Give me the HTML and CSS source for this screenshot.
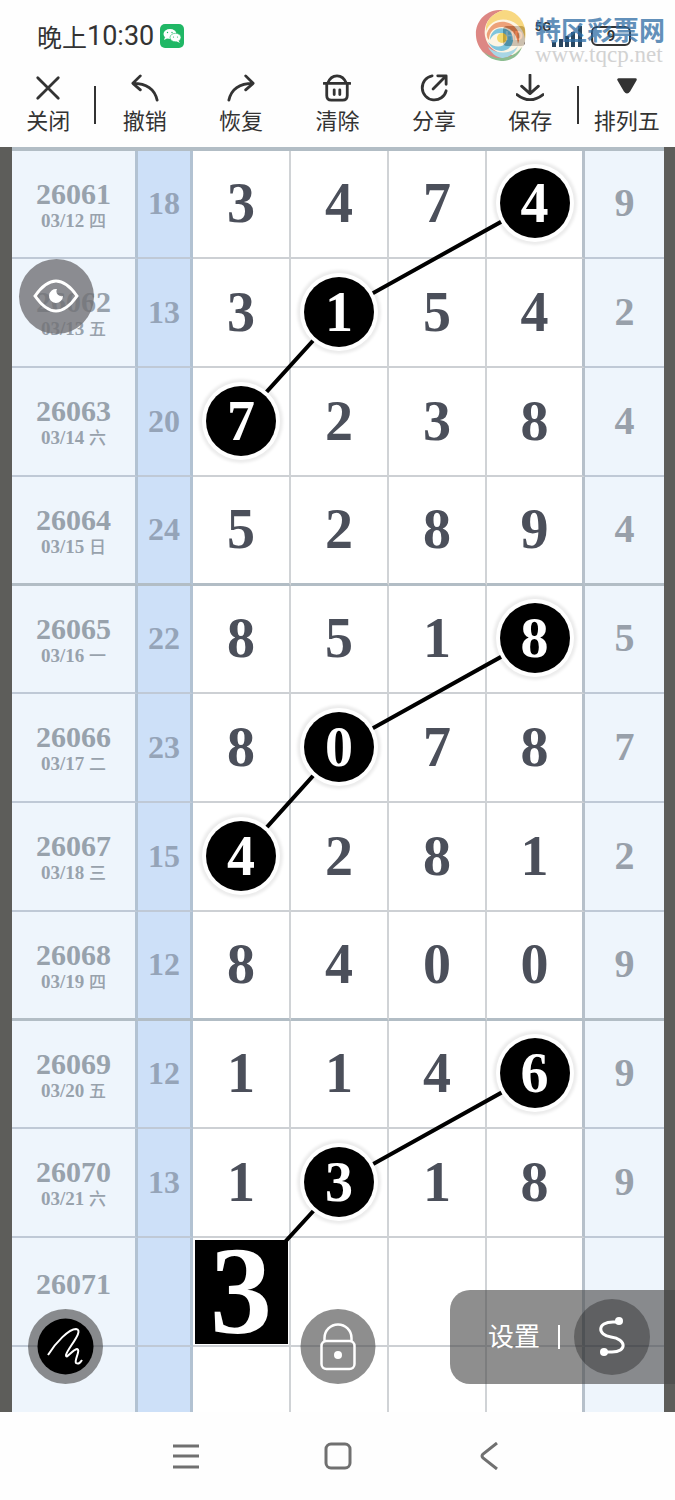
FILE: index.html
```
<!DOCTYPE html>
<html lang="zh-CN">
<head>
  <meta charset="UTF-8">
  <meta name="viewport" content="width=device-width, initial-scale=1">
  <title>排列五</title>
  <link rel="stylesheet" href="styles.css">
</head>
<body>
  <header class="status-bar">
    <div class="clock">晚上<span class="time">10:30</span>
      <svg class="wechat" viewBox="0 0 24 24"><rect width="24" height="24" rx="5" fill="#20b765"/><ellipse cx="10" cy="10" rx="6.500" ry="5" fill="#fff"/><path d="M5 13l-1 3 4-2z" fill="#fff"/><ellipse cx="15.500" cy="13.500" rx="5.500" ry="4.200" fill="#fff" stroke="#20b765" stroke-width=".6"/><path d="M18 16l2 3-4-2z" fill="#fff"/><g fill="#20b765"><circle cx="7.500" cy="8.500" r=".7"/><circle cx="12" cy="8.500" r=".7"/><circle cx="13.500" cy="13" r=".6"/><circle cx="17.500" cy="13" r=".6"/></g></svg>
    </div>
    <div class="phone-icons">
      <span class="hd">HD</span>
      <span class="net">5G</span>
      <svg class="signal" viewBox="0 0 32 22"><path d="M3 22v-5M10 22v-8M16 22V11M22 22V7M29 22V1" stroke="#294660" stroke-width="4"/></svg>
      <span class="battery">9</span>
    </div>
    <div class="watermark">
      <svg class="wm-logo" viewBox="0 0 52 52">
        <circle cx="26" cy="26" r="25" fill="#fdf3dc"/>
        <path d="M24 1C8 2 0 15 1 27C2 39 11 49 22 50C29 51 35 49 38 46C24 47 12 39 10 27C8 15 15 5 29 1z" fill="#d3605c"/>
        <path d="M29 1C15 5 10 14 11 22C15 12 26 8 36 12C44 15 49 22 50 30C53 14 42 1 29 1z" fill="#f6cc58"/>
        <path d="M12 24C16 13 27 10 36 15C44 20 46 27 43 35C42 25 35 18 27 18C19 18 14 23 14 31Q11 28 12 24z" fill="#e8834d"/>
        <path d="M15 31C15 22 23 17 31 20C38 23 40 31 36 37C30 45 18 43 13 33C19 39 28 39 31 33C33 28 30 24 25 24C20 24 17 27 15 31z" fill="#55b2d2"/>
        <path d="M13 38C22 46 37 45 43 37C40 45 33 49 27 49C21 48 16 44 13 38z" fill="#8cc9dd"/>
        <path d="M9 43C21 53 38 50 47 38C43 49 34 52 26 52C19 51 13 49 9 43z" fill="#67a86d"/>
        <circle cx="27" cy="29" r="5" fill="#f1cf3d"/>
      </svg>
      <div class="wm-text">
        <strong>特区彩票网</strong>
        <span>www.tqcp.net</span>
      </div>
    </div>
  </header>

  <nav class="toolbar">
    <button class="tool divider"><svg viewBox="0 0 30 30"><path d="M4 4l22 22M26 4L4 26"/></svg>关闭</button>
    <button class="tool"><svg viewBox="0 0 30 30"><path d="M10 2L2 10l8 7M2 10Q24 10 28 28"/></svg>撤销</button>
    <button class="tool"><svg viewBox="0 0 30 30"><path d="M20 2l8 8-8 7M28 10Q6 10 2 28"/></svg>恢复</button>
    <button class="tool"><svg viewBox="0 0 30 30"><path d="M1 10h28M5 10Q8 2 15 2T25 10M4 10v13q0 5 5 5h12q5 0 5-5V10M12 17v5M18 17v5"/></svg>清除</button>
    <button class="tool"><svg viewBox="0 0 30 30"><path d="M13 2A13 13 0 1 0 28 18M14 16L27 3M19 2h9v9"/></svg>分享</button>
    <button class="tool divider"><svg viewBox="0 0 30 30"><path d="M15 1v20M6 13l9 8 9-8M1 22q14 11 28 0"/></svg>保存</button>
    <button class="tool"><svg viewBox="0 0 30 30"><path d="M6 6h18l-7 12q-2 3-4 0z" fill="currentColor"/></svg>排列五</button>
  </nav>

  <main class="chart">
    <table class="draws">
      <colgroup><col class="col-issue"><col class="col-sum"><col><col><col><col><col class="col-last"></colgroup>
      <tbody>
        <tr class="first"><th>26061<small>03/12 <i>四</i></small></th><td class="sum">18</td><td>3</td><td>4</td><td>7</td><td><span class="ball">4</span></td><td class="last">9</td></tr>
        <tr><th>26062<small>03/13 <i>五</i></small></th><td class="sum">13</td><td>3</td><td><span class="ball">1</span></td><td>5</td><td>4</td><td class="last">2</td></tr>
        <tr><th>26063<small>03/14 <i>六</i></small></th><td class="sum">20</td><td><span class="ball">7</span></td><td>2</td><td>3</td><td>8</td><td class="last">4</td></tr>
        <tr class="group-end"><th>26064<small>03/15 <i>日</i></small></th><td class="sum">24</td><td>5</td><td>2</td><td>8</td><td>9</td><td class="last">4</td></tr>
        <tr class="first"><th>26065<small>03/16 <i>一</i></small></th><td class="sum">22</td><td>8</td><td>5</td><td>1</td><td><span class="ball">8</span></td><td class="last">5</td></tr>
        <tr><th>26066<small>03/17 <i>二</i></small></th><td class="sum">23</td><td>8</td><td><span class="ball">0</span></td><td>7</td><td>8</td><td class="last">7</td></tr>
        <tr><th>26067<small>03/18 <i>三</i></small></th><td class="sum">15</td><td><span class="ball">4</span></td><td>2</td><td>8</td><td>1</td><td class="last">2</td></tr>
        <tr class="group-end"><th>26068<small>03/19 <i>四</i></small></th><td class="sum">12</td><td>8</td><td>4</td><td>0</td><td>0</td><td class="last">9</td></tr>
        <tr class="first"><th>26069<small>03/20 <i>五</i></small></th><td class="sum">12</td><td>1</td><td>1</td><td>4</td><td><span class="ball">6</span></td><td class="last">9</td></tr>
        <tr><th>26070<small>03/21 <i>六</i></small></th><td class="sum">13</td><td>1</td><td><span class="ball">3</span></td><td>1</td><td>8</td><td class="last">9</td></tr>
        <tr class="next"><th>26071</th><td class="sum"></td><td><span class="pick">3</span></td><td></td><td></td><td></td><td class="last"></td></tr>
        <tr class="cut"><th></th><td class="sum"></td><td></td><td></td><td></td><td></td><td class="last"></td></tr>
      </tbody>
    </table>

    <!-- lines between the marked numbers, spans the four white columns -->
    <svg class="links" viewBox="0 0 392 1265" preserveAspectRatio="none">
      <path d="M342 56L146 165L48 273M342 491L146 600L48 709M342 927L146 1036L48 1143"/>
    </svg>

    <button class="round eye" aria-label="显示"><svg viewBox="0 0 75 75"><path d="M16 37Q37 7 58 37Q37 67 16 37z" fill="none" stroke="#fff" stroke-width="3"/><path d="M38 30a7 7 0 1 0 6 7 5 5 0 0 1-6-7z" fill="#fff"/></svg></button>
    <button class="round pen" aria-label="画笔"><svg viewBox="0 0 75 75"><circle cx="37.500" cy="37.500" r="28" fill="#000"/><path d="M20 46C28 33 41 20 48 20C57 21 39 40 38 46C38 51 44 41 49 40C53 41 46 51 48 54Q51 56 54 51" fill="none" stroke="#fff" stroke-width="2"/></svg></button>
    <button class="round lock" aria-label="锁定"><svg viewBox="0 0 75 75"><g fill="none" stroke="#fff" stroke-width="2.500"><rect x="21" y="32" width="33" height="28" rx="5"/><path d="M24 32v-3a13.500 13.500 0 0 1 27 0v3"/></g><circle cx="37.500" cy="46" r="4" fill="#fff"/></svg></button>

    <div class="settings">
      <button class="settings-btn">设置</button>
      <button class="curve" aria-label="连线"><svg viewBox="0 0 76 76"><path d="M45 23H39C23 23 23 36 37 38C53 40 53 53 38 53H30" fill="none" stroke="#fff" stroke-width="3"/><circle cx="45" cy="22" r="4" fill="#fff"/><circle cx="30" cy="53" r="4" fill="#fff"/></svg></button>
    </div>
  </main>

  <footer class="nav-bar">
    <button aria-label="菜单"><svg viewBox="0 0 28 28"><path d="M1 4h26M1 14h26M1 25h26"/></svg></button>
    <button aria-label="主页"><svg viewBox="0 0 28 28"><rect x="2" y="2" width="24" height="24" rx="5"/></svg></button>
    <button aria-label="返回"><svg viewBox="0 0 28 28"><path d="M21 1L7 12q-2 2 0 4l14 11"/></svg></button>
  </footer>
</body>
</html>
```
FILE: styles.css
```
* { box-sizing: border-box; margin: 0; padding: 0; }
body {
  display: flex; flex-direction: column; min-height: 100vh; background: #fefefe; color: #333;
  font-family: Roboto, "Noto Sans CJK SC", sans-serif;
}
button { background: none; border: none; color: inherit; font: inherit; cursor: pointer; }
svg { display: block; }

/* status bar */
.status-bar { position: relative; display: flex; justify-content: space-between; height: 70px; padding: 3px 44px 0 37px; }
.clock { display: flex; align-items: center; height: 66px; font-size: 25px; }
.time { font-size: 27px; }
.wechat { width: 24px; height: 24px; margin-left: 6px; }
.phone-icons { display: flex; align-items: center; height: 66px; }
.hd { background: #3a2a28; color: #e07a62; font-size: 13px; font-weight: bold; line-height: 20px; padding: 0 2px; border-radius: 4px; }
.net { align-self: flex-start; margin: 16px 0 0 10px; font-size: 13px; font-weight: bold; line-height: 16px; }
.signal { width: 32px; height: 22px; }
.battery { margin-left: 8px; width: 40px; border: 2px solid #333; border-radius: 6px; font-size: 15px; font-weight: bold; line-height: 16px; text-align: center; }
.watermark { position: absolute; right: 10px; top: 9px; display: flex; gap: 8px; opacity: .75; }
.wm-logo { width: 52px; height: 52px; }
.wm-text { display: flex; flex-direction: column; padding-top: 4px; color: #2e6ca4; }
.wm-text strong { font-family: "Noto Sans CJK SC", sans-serif; font-size: 26px; line-height: 32px; }
.wm-text span { color: #c4c4c4; font: 23px/20px "Liberation Serif", serif; }

/* toolbar */
.toolbar { display: flex; height: 77px; }
.tool {
  position: relative; flex: 1; display: flex; flex-direction: column; align-items: center; gap: 4px;
  padding-top: 3px; font-size: 22px; line-height: 30px; white-space: nowrap;
}
.tool svg { width: 30px; height: 30px; padding: 1px; fill: none; stroke: currentColor; stroke-width: 3; stroke-linecap: round; stroke-linejoin: round; }
.divider::after { content: ""; position: absolute; right: 0; top: 16px; width: 2px; height: 38px; background: #333; }

/* chart */
.chart { position: relative; padding: 0 11px 0 12px; background: #5d5d5a; }
.draws {
  width: 100%; table-layout: fixed; border-collapse: separate; border-spacing: 0; background: #fff;
  border-top: 4px solid #b2bdc5; font-family: "Liberation Serif", "Noto Sans CJK SC", serif; font-weight: bold; text-align: center;
}
.col-issue { width: 126px; }
.col-sum { width: 55px; }
.col-last { width: 79px; }
.draws tr { height: 109px; }
.draws .first { height: 108px; }
.draws .cut { height: 65px; }
.draws td, .draws th { border-right: 2px solid #d0d3d6; border-bottom: 2px solid #cdd0d4; vertical-align: middle; }
.draws td { padding-bottom: 2px; color: #4b4f5a; font-size: 56px; line-height: 64px; }
.draws th { padding-top: 4px; background: #eef5fc; color: #98a2ac; border-right: 3px solid #b2c2d2; font-size: 30px; line-height: 30px; }
.draws small { display: block; font-size: 19px; line-height: 24px; }
.draws i { font-size: 17px; font-style: normal; font-weight: 500; }
.draws .sum { background: #cde0f8; color: #95a4b8; border-right: 3px solid #b2c2d2; font-size: 32px; }
.draws td:nth-child(6) { border-right: 3px solid #b6c0ca; }
.draws .last { background: #eef5fc; color: #98a0aa; border-right: 0; font-size: 40px; }
.draws .sum, .draws th, .draws .last { border-bottom-color: #bfc9d6; }
.draws .group-end > * { border-bottom: 3px solid #b2bdc5; }
.draws .next > * { padding: 0; }
.draws .next th { padding-bottom: 16px; }
.draws .cut > * { border-bottom: 0; }
.ball {
  position: relative; z-index: 2; display: block; width: 70px; height: 70px; margin: 0 auto; border-radius: 50%;
  background: #000; color: #fff; line-height: 70px; box-shadow: 0 0 0 4px #fff, 0 0 3px 7px rgba(0,0,0,.08);
}
.pick { position: relative; z-index: 2; display: block; width: 93px; height: 104px; margin: 0 auto; background: #000; color: #fff; font-size: 124px; line-height: 104px; }
.links { position: absolute; z-index: 1; left: 193px; top: 0; width: calc(100% - 283px); height: 100%; }
.links path { fill: none; stroke: #000; stroke-width: 4; }

/* floating controls */
.round { position: absolute; z-index: 3; width: 75px; height: 75px; border-radius: 50%; background: rgba(73,73,73,.62); }
.eye { left: 19px; top: 112px; background: rgba(114,114,118,.8); }
.pen { left: 28px; bottom: 28px; }
.lock { left: 50%; bottom: 28px; transform: translateX(-50%); }
.settings {
  position: absolute; z-index: 3; right: 0; bottom: 28px; display: flex; align-items: center; width: 225px; height: 94px;
  padding-left: 38px; border-radius: 20px 0 0 20px; background: rgba(73,73,73,.62); color: #fff;
}
.settings-btn { width: 72px; border-right: 2px solid #fff; font-size: 26px; line-height: 24px; text-align: left; }
.curve { width: 76px; height: 76px; margin-left: 14px; border-radius: 50%; background: rgba(0,0,0,.3); }

/* system navigation */
.nav-bar { flex: 1; display: flex; justify-content: center; align-items: center; gap: 124px; min-height: 88px; }
.nav-bar svg { width: 28px; height: 28px; fill: none; stroke: #707070; stroke-width: 3; }
```
